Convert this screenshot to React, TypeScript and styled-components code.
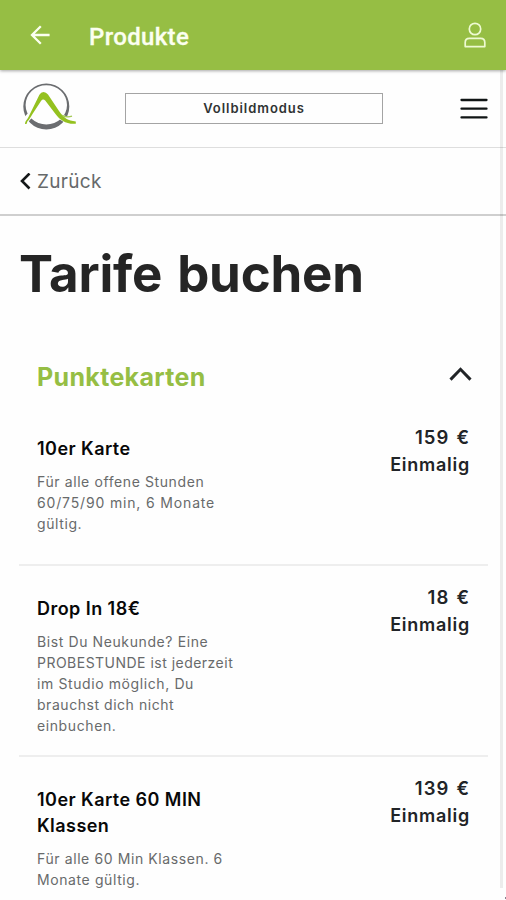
import React from "react";
import styled, { createGlobalStyle } from "styled-components";

const GlobalStyle = createGlobalStyle`
  * { box-sizing: border-box; }
  body { margin: 0; background: #fefefe; font-family: Inter, Roboto, sans-serif; overflow: hidden; }
  h1, h2, h3, p { margin: 0; }
  button { font: inherit; color: inherit; background: none; border: 0; padding: 0; }
  svg { display: block; }
`;

const Screen = styled.div`
  position: relative;
  height: 900px;
  overflow: hidden;
  color: #212427;
`;

const AppBar = styled.header`
  position: relative;
  z-index: 2;
  display: flex;
  align-items: center;
  height: 70px;
  padding: 0 20px 0 30px;
  background: #96be44;
  box-shadow: 0 1px 3px rgba(0, 0, 0, 0.35);
`;

const AppTitle = styled.span`
  flex: 1;
  margin: 3px 0 0 39px;
  color: #fbfff0;
  font: 500 24px/32px Roboto, sans-serif;
  letter-spacing: 0.35px;
  -webkit-text-stroke: 0.3px #fbfff0;
`;

const SiteHeader = styled.div`
  display: flex;
  align-items: center;
  justify-content: space-between;
  height: 78px;
  padding: 0 18px 0 22px;
  border-bottom: 1px solid #dedede;
`;

const FullscreenButton = styled.button`
  width: 258px;
  height: 31px;
  margin: -1px 29px 0 0;
  border: 1px solid #a4a4a4;
  color: #303333;
  font-size: 13px;
  font-weight: 600;
  letter-spacing: 0.95px;
`;

const BackRow = styled.button`
  display: flex;
  align-items: center;
  gap: 6px;
  width: 100%;
  height: 68px;
  padding: 0 20px;
  border-bottom: 2px solid #cfcfcf;
  color: #66696a;
  font-size: 19px;
  letter-spacing: 0.3px;
`;

const Title = styled.h1`
  height: 118px;
  padding: 28px 19px 0;
  color: #252525;
  font-size: 51px;
  line-height: 60px;
  font-weight: 700;
  letter-spacing: -0.2px;
  word-spacing: 3px;
`;

const SectionHead = styled.div`
  display: flex;
  align-items: flex-start;
  justify-content: space-between;
  height: 72px;
  padding: 27px 34px 0 37px;

  svg {
    margin-top: 6px;
  }
`;

const SectionTitle = styled.h2`
  color: #96be44;
  font-size: 25px;
  line-height: 32px;
  font-weight: 700;
  letter-spacing: 0.33px;
`;

const Offer = styled.article<{ $height: number }>`
  display: flex;
  justify-content: space-between;
  height: ${(p) => p.$height}px;
  margin: 0 18px 0 19px;
  padding: 0 18px;
  border-bottom: 2px solid #eeeeee;
`;

const Details = styled.div`
  padding-top: 30px;
  white-space: nowrap;
`;

const Name = styled.h3`
  margin-bottom: 9px;
  color: #080808;
  font-size: 18px;
  line-height: 26px;
  font-weight: 600;
  letter-spacing: 0.45px;
`;

const Description = styled.p`
  color: #686a6b;
  font-size: 14px;
  line-height: 21px;
`;

const DescriptionLine = styled.span<{ $tracking?: number }>`
  display: block;
  letter-spacing: ${(p) => p.$tracking ?? 0.6}px;
`;

const Price = styled.div`
  padding-top: 18px;
  font-size: 18px;
  line-height: 27px;
  font-weight: 600;
  letter-spacing: 0.75px;
  text-align: right;
`;

const Amount = styled.div`
  font-size: 18.5px;
  letter-spacing: 1px;
  word-spacing: 1.5px;
`;

const ScrollTrack = styled.div`
  position: absolute;
  top: 70px;
  right: 3px;
  width: 3px;
  height: 818px;
  background: rgba(0, 0, 0, 0.07);
`;

const CornerMark = styled.i`
  position: absolute;
  right: 0;
  bottom: 1px;
  width: 1px;
  height: 2px;
  background: #888090;
`;

type Line = { text: string; tracking?: number };

const offers: { name: string[]; lines: Line[]; price: string; height: number }[] = [
  {
    name: ["10er Karte"],
    lines: [
      { text: "Für alle offene Stunden" },
      { text: "60/75/90 min, 6 Monate", tracking: 0.84 },
      { text: "gültig." },
    ],
    price: "159 €",
    height: 160,
  },
  {
    name: ["Drop In 18€"],
    lines: [
      { text: "Bist Du Neukunde? Eine" },
      { text: "PROBESTUNDE ist jederzeit", tracking: 0.48 },
      { text: "im Studio möglich, Du" },
      { text: "brauchst dich nicht", tracking: 0.54 },
      { text: "einbuchen." },
    ],
    price: "18 €",
    height: 191,
  },
  {
    name: ["10er Karte 60 MIN", "Klassen"],
    lines: [{ text: "Für alle 60 Min Klassen. 6" }, { text: "Monate gültig." }],
    price: "139 €",
    height: 190,
  },
];

const ArrowIcon = () => (
  <svg width="20" height="20" viewBox="0 0 20 20" fill="none" stroke="#fbfff0" strokeWidth="2.3">
    <path d="M19.6 10H2M10.8 1.2 2 10l8.8 8.8" />
  </svg>
);

const UserIcon = () => (
  <svg width="22" height="26" viewBox="0 0 22 26" fill="none" stroke="#eefad2" strokeWidth="1.7">
    <circle cx="11" cy="7" r="5.7" />
    <path d="M1.2 24.6V20.5Q1.2 16.3 5.4 16.3H16.6Q20.8 16.3 20.8 20.5V24.6Z" strokeLinejoin="round" />
  </svg>
);

const LogoMark = styled.svg`
  margin-top: -3px;
`;

const Logo = () => (
  <LogoMark width="55" height="48" viewBox="0 0 55 48">
    <path
      fillRule="evenodd"
      fill="#6b6d70"
      d="M24.3 .5a23 23 0 1 0 0 46a23 23 0 1 0 0-46ZM24.3 2.3a20.7 19.6 0 1 1 0 39.2a20.7 19.6 0 1 1 0-39.2Z"
    />
    <path d="M3 38L11 29M35 30Q43 39 54 39" fill="none" stroke="#fefefe" strokeWidth="6" />
    <path
      fill="#94c11f"
      d="M3 41C3 38 5 37 6.5 34L17.4 11.8Q19 9 21.5 9Q24 9 26 11.6L37 28C42 35 46 38 53.8 38.4V40.8C44 41.5 38 37 33.5 31L23.2 17.6Q21 15.4 19 18L10.5 31C8 35 7 37 5.5 38.2L4.5 41Z"
    />
    <path d="M40 32.4Q45 35 50 33.2" fill="none" stroke="#a4c956" strokeWidth="1.3" />
  </LogoMark>
);

const MenuIcon = () => (
  <svg width="28" height="22" viewBox="0 0 28 22" stroke="#101515" strokeWidth="2.3" strokeLinecap="round">
    <path d="M1.5 2H26.5M1.5 10.7H26.5M1.5 19.4H26.5" />
  </svg>
);

const BackChevron = () => (
  <svg width="11" height="17" viewBox="0 0 11 17" fill="none" stroke="#151819" strokeWidth="2.6">
    <path d="M9.5 .5 2 8 9.5 15.5" />
  </svg>
);

const UpChevron = () => (
  <svg width="24" height="14" viewBox="0 0 24 14" fill="none" stroke="#212427" strokeWidth="3">
    <path d="M2.5 12.6 12.5 2.3 22.5 12.6" />
  </svg>
);

export default function App() {
  return (
    <Screen>
      <GlobalStyle />
      <AppBar>
        <ArrowIcon />
        <AppTitle>Produkte</AppTitle>
        <UserIcon />
      </AppBar>
      <SiteHeader>
        <Logo />
        <FullscreenButton>Vollbildmodus</FullscreenButton>
        <MenuIcon />
      </SiteHeader>
      <BackRow>
        <BackChevron />
        Zurück
      </BackRow>
      <Title>Tarife buchen</Title>
      <SectionHead>
        <SectionTitle>Punktekarten</SectionTitle>
        <UpChevron />
      </SectionHead>
      {offers.map((offer) => (
        <Offer key={offer.name[0]} $height={offer.height}>
          <Details>
            <Name>
              {offer.name.map((part, i) => (
                <React.Fragment key={part}>
                  {i > 0 && <br />}
                  {part}
                </React.Fragment>
              ))}
            </Name>
            <Description>
              {offer.lines.map((line) => (
                <DescriptionLine key={line.text} $tracking={line.tracking}>
                  {line.text}
                </DescriptionLine>
              ))}
            </Description>
          </Details>
          <Price>
            <Amount>{offer.price}</Amount>
            Einmalig
          </Price>
        </Offer>
      ))}
      <ScrollTrack />
      <CornerMark />
    </Screen>
  );
}
